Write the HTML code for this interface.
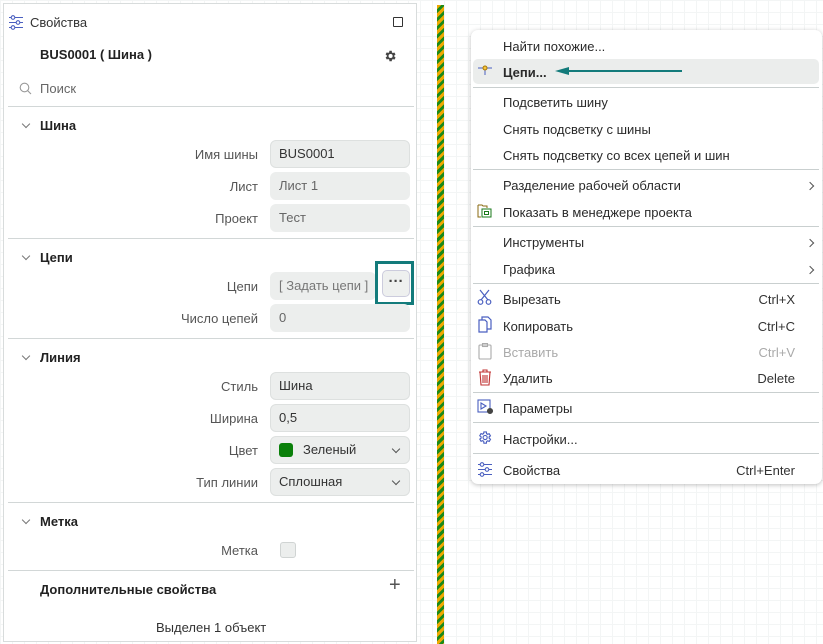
<!DOCTYPE html>
<html><head><meta charset="utf-8"><style>
*{box-sizing:border-box;margin:0;padding:0}
body{width:823px;height:644px;overflow:hidden;position:relative;font-family:"Liberation Sans","Noto Sans CJK SC",sans-serif;font-size:13px;color:#222;
background-color:#fff;background-image:linear-gradient(#f3f5f5 1px,transparent 1px),linear-gradient(90deg,#f3f5f5 1px,transparent 1px);background-size:12px 12px}
.a{position:absolute;white-space:nowrap}
#panel{position:absolute;left:3px;top:3px;width:414px;height:639px;background:#fff;border:1px solid #d8dcdc}
.sep{position:absolute;left:4px;width:406px;height:1px;background:#d2d7d7}
.lab{position:absolute;right:158px;font-size:13px;color:#555}
.fld{position:absolute;left:266px;width:140px;height:28px;background:#eceeed;border:1px solid #dde0df;border-radius:6px;padding-left:8px;line-height:26px;font-size:13px;color:#333}
.sec{position:absolute;left:36px;font-weight:bold;font-size:13px}
.chev{position:absolute;left:19px;width:6px;height:6px;border-right:1px solid #777;border-bottom:1px solid #777;transform:rotate(45deg)}
.dd{position:absolute;right:10px;top:9px;width:6px;height:6px;border-right:1.3px solid #555;border-bottom:1.3px solid #555;transform:rotate(45deg)}
#menu{position:absolute;left:471px;top:30px;width:351px;height:454px;background:#fff;border-radius:7px;box-shadow:0 1px 5px rgba(0,0,0,.25)}
.mi{position:absolute;left:32px;font-size:13px;color:#2a2a2a}
.sc{position:absolute;right:27px;font-size:13px;color:#333}
.ms{position:absolute;left:2px;right:3px;height:1px;background:#c9cfcf}
.ar{position:absolute;right:9px;width:6px;height:6px;border-right:1.3px solid #555;border-top:1.3px solid #555;transform:rotate(45deg)}
</style></head><body>
<div class="a" style="left:437px;top:5px;width:7px;height:639px;background:repeating-linear-gradient(135deg,#f0a800 0 3px,#1a8a1a 3px 6px)"></div>

<div id="panel">
<svg class="a" style="left:4px;top:11px" width="16" height="15" viewBox="0 0 16 15" fill="none" stroke="#4a5fc0" stroke-width="1.1"><path d="M1 2.5h14M1 7.5h14M1 12.5h14"/><circle cx="5" cy="2.5" r="1.8" fill="#fff"/><circle cx="10" cy="7.5" r="1.8" fill="#fff"/><circle cx="5" cy="12.5" r="1.8" fill="#fff"/></svg>
<div class="a" style="left:26px;top:11px;font-size:13px;color:#333">Свойства</div>
<div class="a" style="left:389px;top:13px;width:10px;height:10px;border:1.3px solid #333;border-radius:1px"></div>
<div class="a" style="left:36px;top:43px;font-weight:bold;font-size:13px">BUS0001 ( Шина )</div>
<svg class="a" style="left:379px;top:45px" width="14" height="14" viewBox="0 0 24 24"><path fill="#444" d="M19.4 13a7.5 7.5 0 000-2l2.1-1.6-2-3.5-2.5 1a7 7 0 00-1.7-1L15 3h-4l-.4 2.7a7 7 0 00-1.7 1l-2.5-1-2 3.5L6.6 11a7.5 7.5 0 000 2l-2.1 1.6 2 3.5 2.5-1a7 7 0 001.7 1L11 21h4l.4-2.7a7 7 0 001.7-1l2.5 1 2-3.5zM13 15.5a3.5 3.5 0 110-7 3.5 3.5 0 010 7z"/></svg>
<svg class="a" style="left:15px;top:78px" width="13" height="13" viewBox="0 0 13 13" fill="none" stroke="#999" stroke-width="1.1"><circle cx="5.5" cy="5.5" r="4.3"/><path d="M8.6 8.6L12 12"/></svg>
<div class="a" style="left:36px;top:77px;color:#666">Поиск</div>
<div class="sep" style="top:102px"></div>

<div class="chev" style="top:117px"></div><div class="sec" style="top:114px">Шина</div>
<div class="lab" style="top:143px">Имя шины</div><div class="fld" style="top:136px">BUS0001</div>
<div class="lab" style="top:175px">Лист</div><div class="fld" style="top:168px;border-color:#eceeed;color:#666">Лист 1</div>
<div class="lab" style="top:207px">Проект</div><div class="fld" style="top:200px;border-color:#eceeed;color:#666">Тест</div>
<div class="sep" style="top:234px"></div>

<div class="chev" style="top:249px"></div><div class="sec" style="top:246px">Цепи</div>
<div class="lab" style="top:275px">Цепи</div><div class="fld" style="top:268px;width:106px;border-color:#eceeed;color:#777">[ Задать цепи ]</div>
<div class="a" style="left:371px;top:257px;width:39px;height:44px;border:3px solid #137b7b"></div>
<div class="a" style="left:378px;top:266px;width:28px;height:27px;border:1px solid #ccd;border-radius:5px;background:#eef0ef;text-align:center;line-height:22px;font-weight:bold;font-size:15px;color:#444">···</div>
<div class="lab" style="top:307px">Число цепей</div><div class="fld" style="top:300px;border-color:#eceeed;color:#666">0</div>
<div class="sep" style="top:334px"></div>

<div class="chev" style="top:349px"></div><div class="sec" style="top:346px">Линия</div>
<div class="lab" style="top:375px">Стиль</div><div class="fld" style="top:368px">Шина</div>
<div class="lab" style="top:407px">Ширина</div><div class="fld" style="top:400px">0,5</div>
<div class="lab" style="top:439px">Цвет</div><div class="fld" style="top:432px;padding-left:32px"><span class="a" style="left:8px;top:6px;width:14px;height:14px;background:#0a800a;border-radius:3px"></span>Зеленый<span class="dd"></span></div>
<div class="lab" style="top:471px">Тип линии</div><div class="fld" style="top:464px">Сплошная<span class="dd"></span></div>
<div class="sep" style="top:498px"></div>

<div class="chev" style="top:513px"></div><div class="sec" style="top:510px">Метка</div>
<div class="lab" style="top:539px">Метка</div>
<div class="a" style="left:276px;top:538px;width:16px;height:16px;background:#eceeed;border:1px solid #d0d4d3;border-radius:3px"></div>
<div class="sep" style="top:566px"></div>
<div class="sec" style="top:578px">Дополнительные свойства</div>
<div class="a" style="left:385px;top:570px;font-size:20px;color:#555;font-weight:300">+</div>
<div class="a" style="left:152px;top:616px;color:#333">Выделен 1 объект</div>
</div>

<div id="menu">
<div class="mi" style="top:9px">Найти похожие...</div>
<div class="a" style="left:2px;top:29px;width:346px;height:25px;background:#ebedec;border-radius:5px"></div>
<svg class="a" style="left:7px;top:35px" width="14" height="10" viewBox="0 0 14 10" fill="none" stroke-width="1"><path d="M0 3h14" stroke="#4a5fc0"/><path d="M7 5v5" stroke="#4a5fc0"/><circle cx="7" cy="3" r="2" fill="#f5c542" stroke="#a87800"/></svg>
<div class="mi" style="top:35px;font-weight:bold">Цепи...</div>
<svg class="a" style="left:84px;top:36px" width="130" height="10" viewBox="0 0 130 10"><path d="M10 5H127" stroke="#137b7b" stroke-width="2"/><path d="M0 5L14 1L14 9Z" fill="#137b7b"/></svg>
<div class="ms" style="top:57px"></div>
<div class="mi" style="top:65px">Подсветить шину</div>
<div class="mi" style="top:92px">Снять подсветку с шины</div>
<div class="mi" style="top:118px">Снять подсветку со всех цепей и шин</div>
<div class="ms" style="top:139px"></div>
<div class="mi" style="top:148px">Разделение рабочей области</div><div class="ar" style="top:153px"></div>
<svg class="a" style="left:6px;top:173px" width="15" height="15" viewBox="0 0 15 15" fill="none" stroke="#8a6a10" stroke-width="1"><path d="M1 2h4l1 1h4v2M1 2v12h3"/><rect x="5" y="6" width="9" height="8" stroke="#1a7a1a"/><rect x="7.5" y="8.5" width="4" height="3" stroke="#1a7a1a"/></svg>
<div class="mi" style="top:175px">Показать в менеджере проекта</div>
<div class="ms" style="top:196px"></div>
<div class="mi" style="top:205px">Инструменты</div><div class="ar" style="top:210px"></div>
<div class="mi" style="top:232px">Графика</div><div class="ar" style="top:237px"></div>
<div class="ms" style="top:253px"></div>
<svg class="a" style="left:6px;top:259px" width="15" height="16" viewBox="0 0 15 16" fill="none" stroke="#4a5fc0" stroke-width="1.2"><path d="M3 1l8 10M12 1L4 11"/><circle cx="3.5" cy="13" r="2.3"/><circle cx="11.5" cy="13" r="2.3"/></svg>
<div class="mi" style="top:262px">Вырезать</div><div class="sc" style="top:262px">Ctrl+X</div>
<svg class="a" style="left:7px;top:286px" width="14" height="17" viewBox="0 0 14 17" fill="none" stroke="#4a5fc0" stroke-width="1.2"><path d="M4 4V1h6l3 3v9H9"/><path d="M1 4h6l2 2v10H1z"/></svg>
<div class="mi" style="top:289px">Копировать</div><div class="sc" style="top:289px">Ctrl+C</div>
<svg class="a" style="left:7px;top:313px" width="14" height="17" viewBox="0 0 14 17" fill="none" stroke="#aaa" stroke-width="1.1"><rect x="1" y="2" width="12" height="14" rx="1"/><rect x="4.5" y="0.5" width="5" height="3"/></svg>
<div class="mi" style="top:315px;color:#aaa">Вставить</div><div class="sc" style="top:315px;color:#aaa">Ctrl+V</div>
<svg class="a" style="left:7px;top:339px" width="14" height="17" viewBox="0 0 14 17" fill="none" stroke="#c03030" stroke-width="1.1"><path d="M1 3h12M5 3V1h4v2M2 3l1 13h8l1-13M5 6v8M7 6v8M9 6v8"/></svg>
<div class="mi" style="top:341px">Удалить</div><div class="sc" style="top:341px">Delete</div>
<div class="ms" style="top:362px"></div>
<svg class="a" style="left:6px;top:369px" width="17" height="16" viewBox="0 0 17 16" fill="none" stroke="#4a5fc0" stroke-width="1.1"><rect x="1" y="1" width="12" height="12"/><path d="M4 4l5 3-5 3z"/><circle cx="13" cy="12" r="2.5" fill="#444" stroke="#444"/></svg>
<div class="mi" style="top:371px">Параметры</div>
<div class="ms" style="top:392px"></div>
<svg class="a" style="left:6px;top:400px" width="15" height="15" viewBox="0 0 24 24" fill="none" stroke="#4a5fc0" stroke-width="1.8"><path d="M19.4 13a7.5 7.5 0 000-2l2.1-1.6-2-3.5-2.5 1a7 7 0 00-1.7-1L15 3h-4l-.4 2.7a7 7 0 00-1.7 1l-2.5-1-2 3.5L6.6 11a7.5 7.5 0 000 2l-2.1 1.6 2 3.5 2.5-1a7 7 0 001.7 1L11 21h4l.4-2.7a7 7 0 001.7-1l2.5 1 2-3.5z"/><circle cx="13" cy="12" r="3.3"/></svg>
<div class="mi" style="top:402px">Настройки...</div>
<div class="ms" style="top:423px"></div>
<svg class="a" style="left:6px;top:432px" width="16" height="15" viewBox="0 0 16 15" fill="none" stroke="#4a5fc0" stroke-width="1.1"><path d="M1 2.5h14M1 7.5h14M1 12.5h14"/><circle cx="5" cy="2.5" r="1.8" fill="#fff"/><circle cx="10" cy="7.5" r="1.8" fill="#fff"/><circle cx="5" cy="12.5" r="1.8" fill="#fff"/></svg>
<div class="mi" style="top:433px">Свойства</div><div class="sc" style="top:433px">Ctrl+Enter</div>
</div>
</body></html>
